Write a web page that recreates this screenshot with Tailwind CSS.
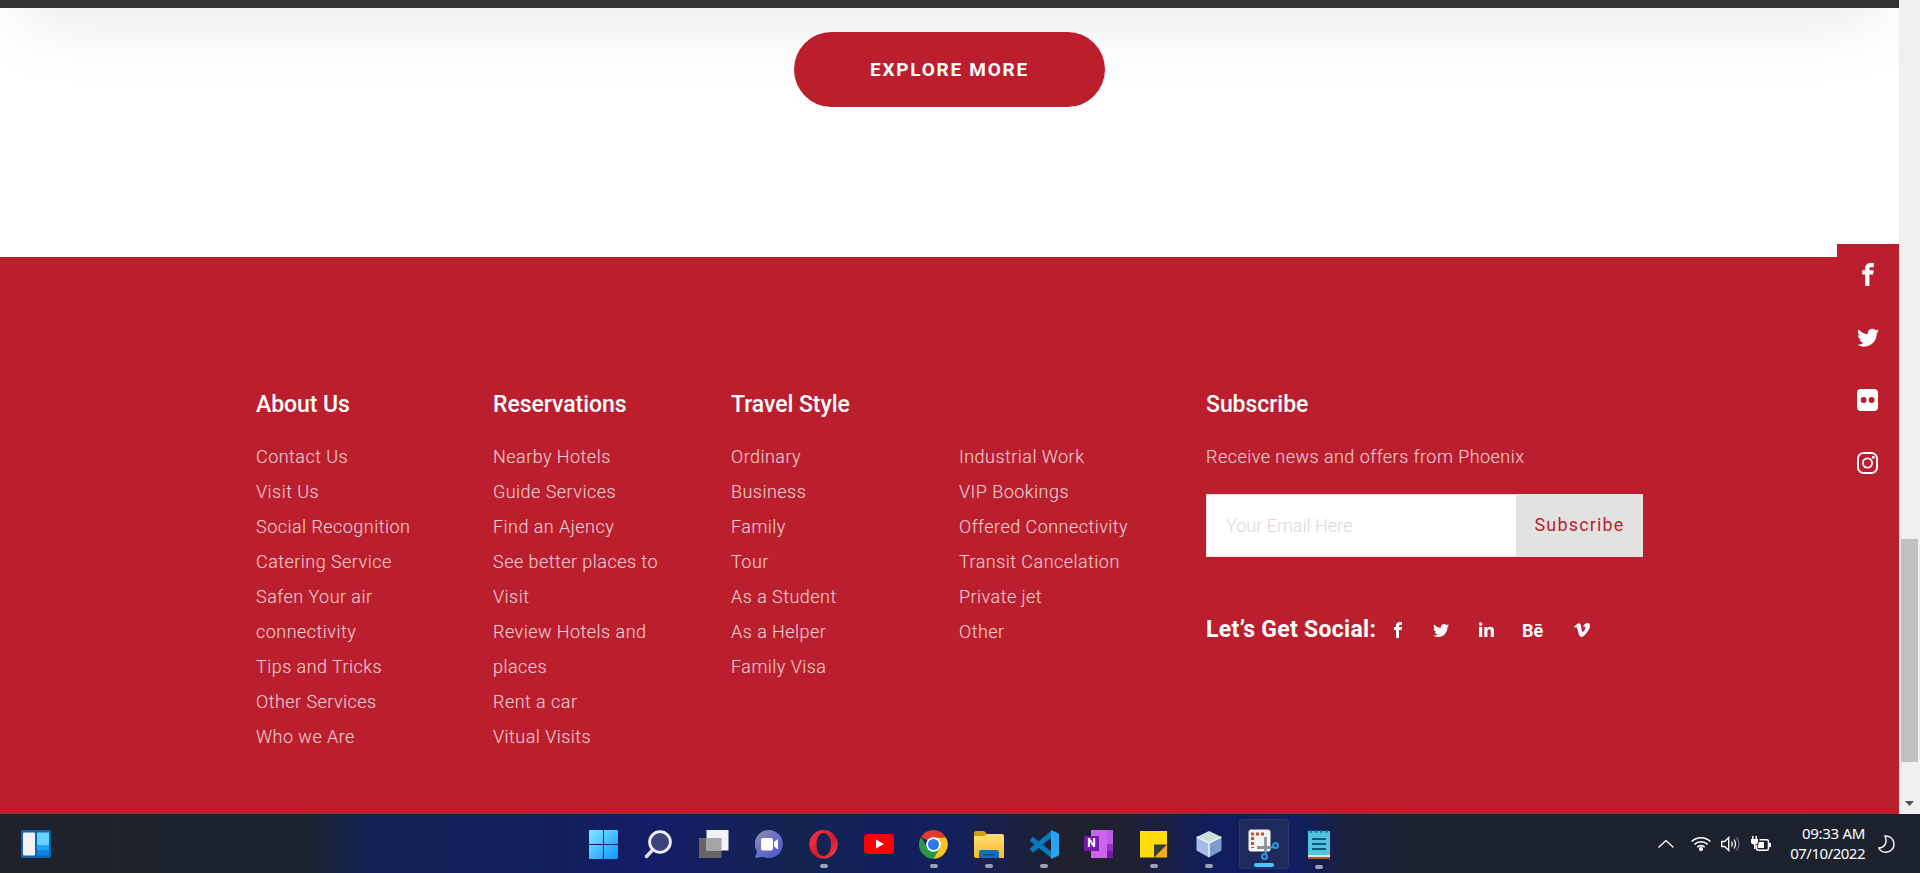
<!DOCTYPE html>
<html lang="en">
<head>
<meta charset="utf-8">
<title>Phoenix Travel</title>
<script src="https://cdn.jsdelivr.net/npm/@tailwindcss/browser@4"></script>
</head>
<body class="flex h-[873px] w-[1920px] flex-col overflow-hidden bg-white font-[Roboto,sans-serif]">
<svg class="hidden">
  <symbol id="fb" viewBox="8 0 16 32"><path d="M19 6h5v-6h-5c-3.86 0-7 3.14-7 7v3h-4v6h4v16h6v-16h5l1-6h-6v-3c0-.542.458-1 1-1z"/></symbol>
  <symbol id="tw" viewBox="0 0 32 32"><path d="M32 7.075c-1.175.525-2.444.875-3.769 1.031 1.356-.813 2.394-2.1 2.887-3.631-1.269.75-2.675 1.3-4.169 1.594-1.2-1.275-2.906-2.069-4.794-2.069-3.625 0-6.563 2.938-6.563 6.563 0 .512.056 1.012.169 1.494-5.456-.275-10.294-2.888-13.531-6.862-.563.969-.887 2.1-.887 3.3 0 2.275 1.156 4.287 2.919 5.463-1.075-.031-2.087-.331-2.975-.819v.081c0 3.181 2.263 5.838 5.269 6.437-.55.15-1.131.231-1.731.231-.425 0-.831-.044-1.237-.119.838 2.606 3.263 4.506 6.131 4.563-2.25 1.762-5.075 2.813-8.156 2.813-.531 0-1.05-.031-1.569-.094 2.913 1.869 6.362 2.95 10.069 2.95 12.075 0 18.681-10.006 18.681-18.681 0-.287-.006-.569-.019-.85 1.281-.919 2.394-2.075 3.275-3.394z"/></symbol>
</svg>

<div class="flex h-[814px]">
  <main class="relative flex w-[1899px] flex-col">
    <div class="h-2 bg-[#333333]"></div>
    <section class="relative flex h-[249px] justify-center overflow-hidden bg-white pt-6">
      <div class="absolute -top-[200px] left-[20px] h-[200px] w-[1859px] shadow-[0_10px_75px_rgba(0,0,0,0.10)]"></div>
      <a class="relative flex h-[75px] w-[311px] items-center justify-center rounded-full bg-[#bb1e2d] pt-0.5 text-[19px] font-bold tracking-[1.75px] text-white">EXPLORE MORE</a>
    </section>

    <footer class="flex h-[557px] bg-[#bb1e2d] pl-[256px] pt-[130px] text-[18px] font-light leading-[35px] tracking-[0.46px] text-white/80">
      <div class="w-[237px]">
        <h3 class="mb-[17px] text-[23px] font-medium tracking-[-0.05px] text-white">About Us</h3>
        <ul><li>Contact Us</li><li>Visit Us</li><li>Social Recognition</li><li>Catering Service</li><li>Safen Your air<br>connectivity</li><li>Tips and Tricks</li><li>Other Services</li><li>Who we Are</li></ul>
      </div>
      <div class="w-[238px]">
        <h3 class="mb-[17px] text-[23px] font-medium tracking-[-0.05px] text-white">Reservations</h3>
        <ul><li>Nearby Hotels</li><li>Guide Services</li><li>Find an Ajency</li><li>See better places to<br>Visit</li><li>Review Hotels and<br>places</li><li>Rent a car</li><li>Vitual Visits</li></ul>
      </div>
      <div class="w-[475px]">
        <h3 class="mb-[17px] text-[23px] font-medium tracking-[-0.05px] text-white">Travel Style</h3>
        <div class="flex">
          <ul class="w-[228px]"><li>Ordinary</li><li>Business</li><li>Family</li><li>Tour</li><li>As a Student</li><li>As a Helper</li><li>Family Visa</li></ul>
          <ul><li>Industrial Work</li><li>VIP Bookings</li><li>Offered Connectivity</li><li>Transit Cancelation</li><li>Private jet</li><li>Other</li></ul>
        </div>
      </div>
      <div class="w-[437px]">
        <h3 class="mb-[17px] text-[23px] font-medium tracking-[-0.05px] text-white">Subscribe</h3>
        <p>Receive news and offers from Phoenix</p>
        <form class="mt-[20px] flex h-[63px]">
          <div class="flex w-[310px] items-center border border-r-0 border-[#f8dfe1] bg-white pl-[19px] tracking-normal text-[#d8d8d8]">Your Email Here</div>
          <div class="flex w-[127px] items-center justify-center bg-[#e2e2e2] pb-[2px] font-normal tracking-[1.15px] text-[#bb1e2d]">Subscribe</div>
        </form>
        <div class="mt-[55px] flex items-center text-white">
          <h4 class="w-[187px] whitespace-nowrap text-[23px] font-bold tracking-[0.3px]">Let’s Get Social:</h4>
          <svg class="mt-px h-4 w-[10px] fill-white"><use href="#fb"/></svg>
          <svg class="ml-[30px] mt-px h-4 w-4 fill-white"><use href="#tw"/></svg>
          <svg class="ml-[30px] mt-px h-4 w-[15px] fill-white" viewBox="0 0 15 16"><path d="M0 5h3.200v10H0zM5.300 5h3v1.400C9 5.300 10 4.700 11.400 4.700c2.600 0 3.600 1.600 3.600 4.300v6h-3.200V9.600c0-1.500-.4-2.300-1.500-2.300-1.200 0-1.900.8-1.900 2.300V15H5.300z"/><circle cx="1.600" cy="2.100" r="1.800"/></svg>
          <span class="ml-[28px] mt-0.5 w-[22px] text-[18px] font-bold leading-4 tracking-[0px]">Bē</span>
          <svg class="ml-[30px] mt-px h-4 w-4 fill-white" viewBox="0 0 32 32"><path d="M31.988 8.563C31.844 11.675 29.669 15.944 25.463 21.350c-4.350 5.650-8.031 8.481-11.044 8.481-1.863 0-3.444-1.719-4.731-5.163L7.106 15.200c-.956-3.444-1.981-5.163-3.075-5.163-.238 0-1.075.506-2.506 1.506L.025 9.606c1.575-1.388 3.131-2.769 4.656-4.156 2.100-1.813 3.675-2.769 4.731-2.869 2.481-.238 4.013 1.463 4.588 5.094.619 3.925 1.050 6.363 1.294 7.319.719 3.256 1.506 4.881 2.369 4.881.669 0 1.675-1.056 3.012-3.175 1.344-2.112 2.056-3.725 2.156-4.831.194-1.825-.525-2.738-2.156-2.738-.769 0-1.556.175-2.369.525 1.575-5.156 4.581-7.656 9.019-7.519 3.281.1 4.838 2.238 4.662 6.425z"/></svg>
        </div>
      </div>
    </footer>

    <!-- social links pinned to the right edge, overlapping the footer -->
    <nav class="absolute right-0 top-[244px] flex h-[250px] w-[62px] flex-col items-center bg-[#bb1e2d] fill-white pr-px">
      <div class="flex h-[61px] items-center"><svg class="h-[23px] w-[12px]"><use href="#fb"/></svg></div>
      <div class="flex h-[63px] items-center"><svg class="h-[22px] w-[22px]"><use href="#tw"/></svg></div>
      <div class="flex h-[63px] items-center"><svg class="h-[22px] w-[21px]" viewBox="0 0 21 22"><path fill-rule="evenodd" d="M4 0h13a4 4 0 0 1 4 4v14a4 4 0 0 1-4 4H4a4 4 0 0 1-4-4V4a4 4 0 0 1 4-4zm2.600 8a3 3 0 1 0 0 6 3 3 0 0 0 0-6zm8 0a3 3 0 1 0 0 6 3 3 0 0 0 0-6z"/></svg></div>
      <div class="flex h-[63px] items-center"><svg class="h-[22px] w-[21px] fill-none stroke-white" viewBox="0 0 21 22" stroke-width="1.900"><rect x="1" y="1" width="19" height="20" rx="5.500"/><circle cx="10.500" cy="11" r="4.600"/><circle cx="16.300" cy="5.200" r=".6"/></svg></div>
    </nav>
  </main>

  <aside class="flex w-[21px] flex-col items-center bg-[#f0f0f0] pt-[539px]">
    <div class="h-[223px] w-[17px] bg-[#c1c1c1]"></div>
    <svg class="mt-[39px] h-[5px] w-[9px] fill-[#505050]" viewBox="0 0 9 5"><path d="M0 0h9L4.500 5z"/></svg>
  </aside>
</div>

<div class="flex h-[59px] items-start bg-[linear-gradient(90deg,#1f222c_0px,#1b232e_300px,#12235a_375px,#121f5c_560px,#151c68_650px,#13254f_800px,#111f5e_880px,#14205a_960px,#20202f_1060px,#1f2033_1130px,#111d5c_1210px,#101f5e_1300px,#1b1f3c_1350px,#1c222e_1430px,#1c222d_1920px)]">
  <div class="w-[576px] pl-[21px] pt-4">
    <svg class="h-7 w-[30px]" viewBox="0 0 30 28"><rect width="30" height="28" fill="#1262a8"/><rect x="2" y="2.500" width="12" height="23" rx="1" fill="#f1f3f7"/><path fill="#65d3ff" d="M16 2.500h12V15H16z"/><path fill="#1fa3f5" d="M16 15h12v5H16z"/><path fill="#0b84e8" d="M16 20h12v5.500H16z"/></svg>
  </div>

  <div class="flex w-[770px] pt-[5px]">
    <div class="flex w-[55px] flex-col items-center pt-[11px]"><svg class="h-[29px] w-[29px]" viewBox="0 0 29 29"><defs><linearGradient id="win" x2="1" y2="1"><stop stop-color="#7cecff"/><stop offset="1" stop-color="#0d94fb"/></linearGradient></defs><path fill="url(#win)" d="M1 0h13v14H0V1a1 1 0 0 1 1-1zM15 0h13a1 1 0 0 1 1 1v13H15zM0 15h14v14H1a1 1 0 0 1-1-1zM15 15h14v13a1 1 0 0 1-1 1H15z"/></svg></div>
    <div class="flex w-[55px] flex-col items-center pt-[11px]"><svg class="h-[29px] w-[29px]" viewBox="0 0 29 29"><path d="M2.500 26.500 9 19.500" stroke="#d8dee8" stroke-width="3.500" stroke-linecap="round"/><circle cx="16" cy="12" r="10.400" fill="#3c427e" stroke="#eef2f6" stroke-width="2.800"/></svg></div>
    <div class="flex w-[55px] flex-col items-center pt-[11px]"><svg class="h-[29px] w-[30px]" viewBox="0 0 30 29"><path fill="#666" d="M0 8h22.500v20H0z"/><path fill="#f3f3f5" d="M7.500 0h22v20.500h-22z"/><path fill="#a5a5a7" d="M7.500 8h15v12.500h-15z"/></svg></div>
    <div class="flex w-[55px] flex-col items-center pt-[11px]"><svg class="h-[29px] w-[28px]" viewBox="0 0 28 29"><defs><linearGradient id="chat" x2="1" y2="1"><stop stop-color="#968bb5"/><stop offset=".5" stop-color="#6870c8"/><stop offset="1" stop-color="#5353c8"/></linearGradient></defs><path fill="url(#chat)" d="M14 0a14 14 0 1 1-6 26.700L0 28l2-6.500A14 14 0 0 1 14 0z"/><rect x="6" y="8" width="12" height="12.500" rx="2" fill="#fff"/><path fill="#fff" d="m19 12 4-3v10.500l-4-3z"/></svg></div>
    <div class="flex w-[55px] flex-col items-center pt-[11px]"><svg class="h-[29px] w-[29px]" viewBox="0 0 29 29"><defs><linearGradient id="op" x2="1" y2="1"><stop stop-color="#ff3548"/><stop offset=".55" stop-color="#d41b2d"/><stop offset="1" stop-color="#e04a50"/></linearGradient></defs><path fill="url(#op)" fill-rule="evenodd" d="M14.500 0a14.200 14.300 0 1 1 0 28.600 14.200 14.300 0 0 1 0-28.600zm0 3C10 3 7.500 8.500 7.500 14.500S10 26 14.500 26s7.500-5.500 7.500-11.500S19 3 14.500 3z"/></svg><i class="mt-[5px] h-1 w-2 rounded-full bg-[#9ba0b8]"></i></div>
    <div class="flex w-[55px] flex-col items-center pt-[15px]"><svg class="h-[20px] w-[30px]" viewBox="0 0 30 20"><rect width="30" height="20" rx="4" fill="#f00"/><path fill="#fff" d="m12 5.500 8 4.500-8 4.500z"/></svg></div>
    <div class="flex w-[55px] flex-col items-center pt-[11px]"><svg class="h-[29px] w-[29px]" viewBox="0 0 48 48"><path fill="#e23b2e" d="M24 24 3.700 11.500A23.500 23.500 0 0 1 44.500 12.500H24z"/><path fill="#fcc31e" d="M24 12.500h20.500A23.500 23.500 0 0 1 23.500 47.500L34 30z"/><path fill="#279847" d="M3.700 11.500 14 29.500c4 6.500 13 8 19 2L23.500 47.500A23.500 23.500 0 0 1 3.700 11.500z"/><circle cx="24" cy="24" r="12" fill="#fff"/><circle cx="24" cy="24" r="9.200" fill="#2c7be8"/></svg><i class="mt-[5px] h-1 w-2 rounded-full bg-[#9ba0b8]"></i></div>
    <div class="flex w-[55px] flex-col items-center pt-[11px]"><svg class="h-[29px] w-[30px]" viewBox="0 0 30 29"><defs><linearGradient id="fold" x2="0" y2="1"><stop stop-color="#ffe07a"/><stop offset="1" stop-color="#fbb728"/></linearGradient></defs><path fill="#d99d13" d="M0 3q0-2 2-2h8l4 4h3v6H0z"/><path fill="url(#fold)" d="M0 6h10l3-2h15q2 0 2 2v22H2q-2 0-2-2z"/><path fill="#0f6fbe" d="M5 28v-6q0-2 2-2h16q2 0 2 2v6z"/><path fill="#0a4e88" d="M9 24h12v1.500H9z"/></svg><i class="mt-[5px] h-1 w-2 rounded-full bg-[#9ba0b8]"></i></div>
    <div class="flex w-[55px] flex-col items-center pt-[11px]"><svg class="h-[29px] w-[30px]" viewBox="0 0 30 29"><path fill="none" stroke="#0879bd" stroke-width="5" stroke-linejoin="round" d="M24 2.800 2.200 20.800M2.200 8.800 24 26"/><path fill="#27a5f2" d="m22 0 6.800 3q1.200.5 1.200 1.800v19.400q0 1.300-1.200 1.800L22 29z"/></svg><i class="mt-[5px] h-1 w-2 rounded-full bg-[#9ba0b8]"></i></div>
    <div class="flex w-[55px] flex-col items-center pt-[11px]"><div class="relative h-[29px] w-[29px]"><svg class="h-[29px] w-[29px]" viewBox="0 0 29 29"><path fill="#ca64ea" d="M7 0h16v28H7z"/><path fill="#bd5be5" d="M23 0h6v14h-6z"/><path fill="#9332bf" d="M23 14h6v7h-6z"/><path fill="#7719aa" d="M23 21h6v7h-6z"/><rect y="6" width="15" height="15" rx="1" fill="#7a18a8"/></svg><span class="absolute left-0 top-[6px] w-[15px] text-center text-[12px] font-bold leading-[15px] text-white">N</span></div></div>
    <div class="flex w-[55px] flex-col items-center pt-[11px]"><svg class="h-[29px] w-[27px]" viewBox="0 0 27 29"><path fill="#ffdc0b" d="M0 1h27v14L14 27.500H0z"/><path fill="#f2ad13" d="M27 14v13.500H14z"/><path fill="#3b3934" d="M14 14.500h13L14 27.500z"/></svg><i class="mt-[5px] h-1 w-2 rounded-full bg-[#9ba0b8]"></i></div>
    <div class="flex w-[55px] flex-col items-center pt-[11px]"><svg class="h-[29px] w-[26px]" viewBox="0 0 26 29"><path fill="#cbdfdb" d="M13 1 25.500 7 13 13 .5 7z"/><path fill="#a6bce8" d="M.5 7 13 13v14.500L.5 20.500z"/><path fill="#7f9bce" d="M25.500 7 13 13v14.500l12.500-7z"/><path fill="none" stroke="#e8f3fa" stroke-width="1.500" d="m.8 7 12.200 6 12.200-6M13 13v14"/></svg><i class="mt-[5px] h-1 w-2 rounded-full bg-[#9ba0b8]"></i></div>
    <div class="flex w-[55px] justify-center"><div class="flex h-[50px] w-[50px] flex-col items-center rounded border border-[#2c3868] bg-[#1d2a5b] pt-[9px]"><svg class="h-[31px] w-[31px]" viewBox="0 0 31 31"><rect x=".5" y=".5" width="22" height="22" rx="2.500" fill="#f4f4f4"/><path fill="none" stroke="#c8502b" stroke-width="3" stroke-dasharray="3 2" d="M3 5h14M4.500 8v11"/><path fill="none" stroke="#8a929b" stroke-width="2.800" d="M17.500 8v14M9 18.500h14"/><g fill="none" stroke="#2d9ade" stroke-width="2"><circle cx="27.500" cy="16.500" r="2.500"/><circle cx="16.500" cy="27.500" r="2.500"/><path d="m22 19 3-1.500M18.500 22l-1.500 3"/></g></svg><i class="mt-[3px] h-1 w-5 rounded-full bg-[#4cc2ff]"></i></div></div>
    <div class="flex w-[55px] flex-col items-center pt-[10px]"><svg class="h-[30px] w-[22px]" viewBox="0 0 22 30"><path fill="#53c4e0" d="M0 2h22v25H0z"/><path fill="#e8e4d8" d="M0 26h22v2H0z"/><path fill="#a65c24" d="M0 28h22v2H0z"/><path fill="none" stroke="#0b587c" stroke-width="2" d="M4 10h14M4 15h14M4 20h14"/><path fill="none" stroke="#1b7598" stroke-width="2.600" stroke-dasharray="2.500 2.500" d="M2 2.500h19"/></svg><i class="mt-[6px] h-1 w-2 rounded-full bg-[#9ba0b8]"></i></div>
  </div>

  <div class="flex h-[59px] flex-1 items-center pl-[312px] text-white">
    <svg class="h-2 w-4 fill-none stroke-white" viewBox="0 0 16 8" stroke-width="1.300"><path d="m.5 7.500 7.500-7 7.500 7"/></svg>
    <svg class="ml-[17px] h-[15px] w-5 fill-none stroke-white" viewBox="0 0 20 15" stroke-width="1.600"><path d="M.6 5.500a13.500 13.500 0 0 1 18.800 0M3.500 8.400a9.300 9.300 0 0 1 13 0M6.300 11.200a5.200 5.200 0 0 1 7.400 0"/><circle cx="10" cy="13" r="1.300" fill="#fff"/></svg>
    <svg class="ml-[10px] h-[16px] w-5 fill-none stroke-white" viewBox="0 0 20 16" stroke-width="1.300"><path d="M.7 5.500h3l4-4v13l-4-4h-3zM10.500 5.500q1.500 2.500 0 5M13 3.500q3 4.500 0 9"/><path d="M15.500 1.500q5 6.500 0 13" opacity=".35"/></svg>
    <svg class="ml-[10px] h-[17px] w-5 fill-none stroke-white" viewBox="0 0 20 17" stroke-width="1.500"><path d="M8.500 4.700h7q2 0 2 2v6.500q0 2-2 2h-8q-2 0-2-2V10"/><path fill="#fff" stroke="none" d="M8 7h5v6H7v-3zM18 8h2v4h-2zM0 4h1V1h1.500v3h2V1H6v3h1v3q0 2-2.500 2.500V14H3V9.500Q0 9 0 7z"/></svg>
    <div class="ml-[14px] w-[80px] whitespace-nowrap pb-px text-right font-['Noto_Sans',sans-serif] text-[15px] leading-[20px] tracking-[-0.5px]"><div class="tracking-[-0.3px]">09:33 AM</div><div>07/10/2022</div></div>
    <svg class="ml-[13px] h-[18px] w-[17px] fill-none stroke-white" viewBox="0 0 17 18" stroke-width="1.400"><path d="M7 1c6-.5 9 4 9 8.500S12 17.300 8 17.300C4.500 17.300 2 15.500.8 13 6 13 10 8 7 1z"/></svg>
  </div>
</div>
</body>
</html>
